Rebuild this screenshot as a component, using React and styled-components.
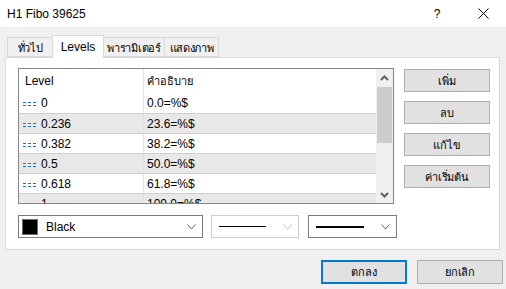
import React from "react";
import styled, { createGlobalStyle } from "styled-components";

const Global = createGlobalStyle`
  html, body { margin: 0; padding: 0; background: #f0f0f0; }
  body { font-family: "Segoe UI", "Liberation Sans", "Noto Sans", sans-serif; font-size: 12px; color: #000; }
  * { box-sizing: border-box; }
`;

const Window = styled.div`
  width: 506px;
  height: 289px;
  display: flex;
  flex-direction: column;
  background: #f0f0f0;
  overflow: hidden;
`;

const TitleBar = styled.div`
  height: 27px;
  background: #fff;
  display: flex;
  align-items: center;
  padding-left: 7px;
  font-size: 12px;
`;

const Title = styled.div`
  flex: 1;
`;

const TitleButton = styled.div`
  width: 46px;
  display: flex;
  justify-content: center;
  align-items: center;
  color: #000;
`;

const Body = styled.div`
  padding: 8px 6px 0 5px;
  display: flex;
  flex-direction: column;
`;

const TabStrip = styled.div`
  height: 22px;
  display: flex;
  align-items: flex-end;
  padding-left: 2px;
  position: relative;
  z-index: 2;
`;

const Tab = styled.div`
  width: ${(p) => p.$w}px;
  height: ${(p) => (p.$active ? 23 : 20)}px;
  margin-bottom: ${(p) => (p.$active ? -1 : 0)}px;
  margin-left: -1px;
  border: 1px solid #d9d9d9;
  border-bottom: ${(p) => (p.$active ? "none" : "1px solid #d9d9d9")};
  background: ${(p) => (p.$active ? "#fff" : "#f0f0f0")};
  display: flex;
  align-items: center;
  justify-content: center;
  font-size: ${(p) => (p.$thai ? 11 : 12)}px;
  letter-spacing: ${(p) => (p.$thai ? "-0.3px" : "0")};
  white-space: nowrap;
  padding-top: ${(p) => (p.$active ? 0 : 1)}px;
  &:first-child { margin-left: 0; }
`;

const Panel = styled.div`
  height: 193px;
  background: #fff;
  border: 1px solid #d9d9d9;
  padding: 10px 0 0 12px;
  display: flex;
  flex-direction: column;
  gap: 11px;
`;

const TopRow = styled.div`
  display: flex;
  gap: 10px;
`;

const List = styled.div`
  width: 376px;
  height: 136px;
  border: 1px solid #828790;
  display: flex;
  overflow: hidden;
`;

const ListBody = styled.div`
  flex: 1;
  display: flex;
  flex-direction: column;
  overflow: hidden;
`;

const Row = styled.div`
  flex: none;
  height: ${(p) => (p.$header ? 24 : 20)}px;
  display: flex;
  background: ${(p) => (p.$alt ? "#e8e8e8" : "#fff")};
  border-top: ${(p) => (p.$line ? "1px solid #cfcfcf" : "none")};
`;

const Cell = styled.div`
  width: ${(p) => (p.$first ? "125px" : "auto")};
  flex: ${(p) => (p.$first ? "none" : "1")};
  border-right: ${(p) => (p.$first ? "1px solid #e2e2e2" : "none")};
  display: flex;
  align-items: center;
  padding-left: ${(p) => (p.$first ? (p.$header ? 6 : 4) : 3)}px;
  gap: 4px;
  white-space: nowrap;
  font-size: ${(p) => (p.$thai ? 11 : 12)}px;
`;

const ScrollBar = styled.div`
  width: 17px;
  background: #f0f0f0;
  display: flex;
  flex-direction: column;
  align-items: center;
`;

const ScrollArrow = styled.div`
  width: 17px;
  height: 17px;
  display: flex;
  align-items: center;
  justify-content: center;
`;

const Thumb = styled.div`
  width: 15px;
  height: 56px;
  background: #cdcdcd;
  margin-top: 1px;
`;

const Track = styled.div`
  flex: 1;
`;

const SideButtons = styled.div`
  display: flex;
  flex-direction: column;
  gap: 9px;
  padding-top: 1px;
`;

const Button = styled.div`
  width: ${(p) => p.$w || 86}px;
  height: ${(p) => p.$h || 23}px;
  background: #e1e1e1;
  border: ${(p) => (p.$default ? "2px solid #0078d7" : "1px solid #adadad")};
  display: flex;
  align-items: center;
  justify-content: center;
  font-size: 11px;
  letter-spacing: -0.2px;
`;

const ComboRow = styled.div`
  display: flex;
  gap: 8px;
`;

const Combo = styled.div`
  width: ${(p) => p.$w}px;
  height: 23px;
  border: 1px solid ${(p) => (p.$disabled ? "#cccccc" : "#7a7a7a")};
  background: #fff;
  display: flex;
  align-items: center;
  padding: 0 6px 0 3px;
  gap: 8px;
  margin-left: ${(p) => p.$ml || 0}px;
`;

const Swatch = styled.div`
  width: 16px;
  height: 16px;
  background: #000;
  border: 1px solid #6e6e6e;
`;

const ComboText = styled.div`
  flex: 1;
  font-size: 12px;
`;

const LineSample = styled.div`
  flex: 1;
  height: ${(p) => p.$t}px;
  background: #000;
  margin: 0 9px 0 4px;
`;

const Footer = styled.div`
  display: flex;
  justify-content: flex-end;
  gap: 10px;
  padding: 10px 3px 0 0;
`;

const Dashes = () => (
  <svg width="14" height="8" viewBox="0 0 14 8">
    <g stroke="#1e6fd0" strokeWidth="1">
      <line x1="0" y1="3.5" x2="3" y2="3.5" />
      <line x1="5" y1="3.5" x2="8" y2="3.5" />
      <line x1="10" y1="3.5" x2="13" y2="3.5" />
      <line x1="0" y1="6.5" x2="3" y2="6.5" />
      <line x1="5" y1="6.5" x2="8" y2="6.5" />
      <line x1="10" y1="6.5" x2="13" y2="6.5" />
    </g>
  </svg>
);

const Chevron = ({ color = "#606060", w = 9, h = 5 }) => (
  <svg width={w} height={h + 1} viewBox={`0 0 ${w} ${h + 1}`}>
    <polyline
      points={`0.5,0.5 ${w / 2},${h} ${w - 0.5},0.5`}
      fill="none"
      stroke={color}
      strokeWidth="1"
    />
  </svg>
);

const ScrollChevron = ({ up }) => (
  <svg width="9" height="6" viewBox="0 0 9 6">
    <polyline
      points={up ? "1,5 4.5,1.5 8,5" : "1,1 4.5,4.5 8,1"}
      fill="none"
      stroke="#606060"
      strokeWidth="2"
    />
  </svg>
);

const levels = [
  ["0", "0.0=%$"],
  ["0.236", "23.6=%$"],
  ["0.382", "38.2=%$"],
  ["0.5", "50.0=%$"],
  ["0.618", "61.8=%$"],
  ["1", "100.0=%$"],
];

const tabs = [
  ["ทั่วไป", 46, false, true],
  ["Levels", 52, true, false],
  ["พารามิเตอร์", 62, false, true],
  ["แสดงภาพ", 55, false, true],
];

export default function App() {
  return (
    <Window>
      <Global />
      <TitleBar>
        <Title>H1 Fibo 39625</Title>
        <TitleButton>?</TitleButton>
        <TitleButton>
          <svg width="11" height="11" viewBox="0 0 11 11">
            <path d="M0.5 0.5 L10.5 10.5 M10.5 0.5 L0.5 10.5" stroke="#000" strokeWidth="1" />
          </svg>
        </TitleButton>
      </TitleBar>
      <Body>
        <TabStrip>
          {tabs.map(([label, w, active, thai]) => (
            <Tab key={label} $w={w} $active={active} $thai={thai}>
              {label}
            </Tab>
          ))}
        </TabStrip>
        <Panel>
          <TopRow>
            <List>
              <ListBody>
                <Row $header>
                  <Cell $first $header>Level</Cell>
                  <Cell $header $thai>คำอธิบาย</Cell>
                </Row>
                {levels.map(([lv, desc], i) => (
                  <Row key={lv} $alt={i % 2 === 1} $line={i > 0}>
                    <Cell $first>
                      <Dashes />
                      {lv}
                    </Cell>
                    <Cell>{desc}</Cell>
                  </Row>
                ))}
              </ListBody>
              <ScrollBar>
                <ScrollArrow>
                  <ScrollChevron up />
                </ScrollArrow>
                <Thumb />
                <Track />
                <ScrollArrow>
                  <ScrollChevron />
                </ScrollArrow>
              </ScrollBar>
            </List>
            <SideButtons>
              <Button>เพิ่ม</Button>
              <Button>ลบ</Button>
              <Button>แก้ไข</Button>
              <Button>ค่าเริ่มต้น</Button>
            </SideButtons>
          </TopRow>
          <ComboRow>
            <Combo $w={185}>
              <Swatch />
              <ComboText>Black</ComboText>
              <Chevron />
            </Combo>
            <Combo $w={88} $disabled>
              <LineSample $t={1} />
              <Chevron color="#bfbfbf" />
            </Combo>
            <Combo $w={89} $ml={1}>
              <LineSample $t={2} />
              <Chevron />
            </Combo>
          </ComboRow>
        </Panel>
      </Body>
      <Footer>
        <Button $default $h={24}>ตกลง</Button>
        <Button $h={24}>ยกเลิก</Button>
      </Footer>
    </Window>
  );
}
